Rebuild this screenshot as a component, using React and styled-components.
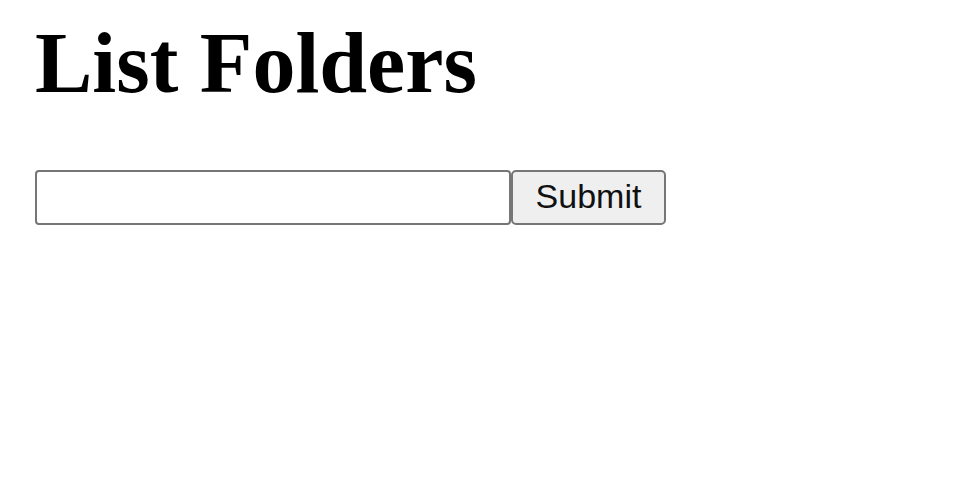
import React from "react";
import styled, { createGlobalStyle } from "styled-components";

const Global = createGlobalStyle`
  html, body { margin: 0; padding: 0; background: #ffffff; }
  body { font-family: "Liberation Serif", "Times New Roman", serif; color: #000; }
`;

const Page = styled.div`
  padding: 17px 0 0 35px;
`;

const Title = styled.h1`
  margin: 0;
  font-family: "Liberation Serif", "Times New Roman", serif;
  font-weight: 700;
  font-size: 86px;
  line-height: 93px;
  color: #000;
  white-space: nowrap;
`;

const Form = styled.form`
  display: flex;
  align-items: stretch;
  margin-top: 60px;
  height: 55px;
`;

const TextInput = styled.input`
  box-sizing: border-box;
  width: 476px;
  height: 55px;
  margin: 0;
  padding: 2px 6px;
  border: 2px solid #767676;
  border-radius: 4px;
  background: #fff;
  font-family: "Liberation Sans", Arial, sans-serif;
  font-size: 34px;
  outline: none;
`;

const Button = styled.button`
  box-sizing: border-box;
  width: 155px;
  height: 55px;
  margin: 0;
  padding: 0 0 2px;
  border: 2px solid #767676;
  border-radius: 5px;
  background: #efefef;
  color: #111;
  font-family: "Liberation Sans", Arial, sans-serif;
  font-size: 34px;
  cursor: pointer;
`;

export default function App() {
  return (
    <>
      <Global />
      <Page>
        <Title>List Folders</Title>
        <Form onSubmit={(e) => e.preventDefault()}>
          <TextInput type="text" />
          <Button type="submit">Submit</Button>
        </Form>
      </Page>
    </>
  );
}
